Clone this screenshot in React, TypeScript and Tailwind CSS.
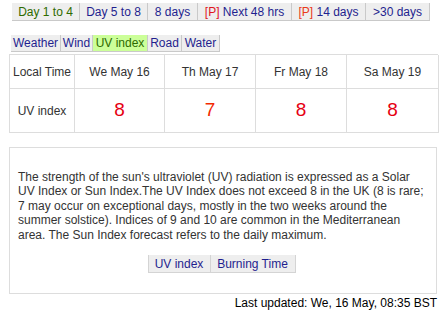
import React from "react";

const navBtn =
  "h-[18px] flex items-center justify-center bg-[#eeeeee] border-r border-b border-[#c9c9c9] text-[12px] text-[#1f1f8f] whitespace-nowrap";

export default function App() {
  const top = [
    { w: "w-[68px]", label: <>Day 1 to 4</>, active: true },
    { w: "w-[68px]", label: <>Day 5 to 8</> },
    { w: "w-[50px]", label: <>8 days</> },
    { w: "w-[94px]", label: <><span className="text-[#e0161e]">[P]</span>&nbsp;Next 48 hrs</> },
    { w: "w-[74px]", label: <><span className="text-[#ea3a1a]">[P]</span>&nbsp;14 days</> },
    { w: "w-[64px]", label: <>&gt;30 days</> },
  ];
  const tabs = [
    { w: "w-[50px]", label: "Weather" },
    { w: "w-[32px]", label: "Wind" },
    { w: "w-[55px]", label: "UV index", active: true },
    { w: "w-[34px]", label: "Road" },
    { w: "w-[38px]", label: "Water" },
  ];
  const days = ["We May 16", "Th May 17", "Fr May 18", "Sa May 19"];
  const vals = [
    { v: "8", c: "text-[#e60012]" },
    { v: "7", c: "text-[#f22a00]" },
    { v: "8", c: "text-[#e60012]" },
    { v: "8", c: "text-[#e60012]" },
  ];
  const cell = "border-r border-b border-[#dddddd] flex items-center justify-center text-[12px] text-[#333333]";
  return (
    <div
      className="w-[445px] h-[313px] bg-white overflow-hidden"
      style={{ fontFamily: '"Liberation Sans", Arial, sans-serif' }}
    >
      <div className="flex pt-[3px] pl-[12px]">
        {top.map((b, i) => (
          <div
            key={i}
            className={`${b.w} ${navBtn} ${b.active ? "bg-[#ccff99] text-[#2e6b00]" : ""}`}
          >
            {b.label}
          </div>
        ))}
      </div>
      <div className="flex mt-[14px] pl-[11px]">
        {tabs.map((t, i) => (
          <div
            key={i}
            className={`${t.w} h-[17px] flex items-center justify-center border-r border-b border-[#c9c9c9] text-[12px] whitespace-nowrap ${
              t.active ? "bg-[#ccff99] text-[#2e6b00]" : "bg-[#eeeeee] text-[#1f1f8f]"
            }`}
          >
            {t.label}
          </div>
        ))}
      </div>
      <div className="ml-[9px] mt-[2px] w-[429px] grid grid-cols-[65px_90px_91px_91px_92px] grid-rows-[34px_44px] border-l border-t border-[#dddddd]">
        <div className={cell}>Local Time</div>
        {days.map((d) => (
          <div key={d} className={cell}>
            {d}
          </div>
        ))}
        <div className={cell}>UV index</div>
        {vals.map((v, i) => (
          <div key={i} className={`${cell} !text-[19px] ${v.c}`}>
            <span className={v.c}>{v.v}</span>
          </div>
        ))}
      </div>
      <div className="ml-[9px] mt-[14px] w-[428px] h-[147px] border border-[#dddddd] pt-[22px] px-[8px]">
        <p className="text-[12px] leading-[14.4px] text-[#333333] whitespace-nowrap">
          The strength of the sun's ultraviolet (UV) radiation is expressed as a Solar
          <br />
          UV Index or Sun Index.The UV Index does not exceed 8 in the UK (8 is rare;
          <br />
          7 may occur on exceptional days, mostly in the two weeks around the
          <br />
          summer solstice). Indices of 9 and 10 are common in the Mediterranean
          <br />
          area. The Sun Index forecast refers to the daily maximum.
        </p>
        <div className="flex justify-center mt-[13px] pr-[3px]">
          <div className="w-[63px] h-[18px] flex items-center justify-center bg-[#eeeeee] border-r border-b border-l border-[#d4d4d4] text-[12px] text-[#1f1f8f]">
            UV index
          </div>
          <div className="w-[85px] h-[18px] flex items-center justify-center bg-[#eeeeee] border-r border-b border-[#d4d4d4] text-[12px] text-[#1f1f8f]">
            Burning Time
          </div>
        </div>
      </div>
      <div className="w-[437px] text-right text-[12px] text-black mt-[2px] leading-[14px]">
        Last updated: We, 16 May, 08:35 BST
      </div>
    </div>
  );
}
